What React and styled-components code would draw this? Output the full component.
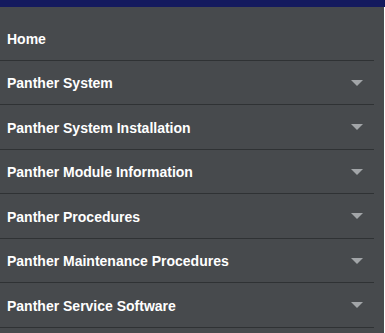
import React from "react";
import styled, { createGlobalStyle } from "styled-components";

const Global = createGlobalStyle`
  html, body { margin: 0; padding: 0; background: #ffffff; }
  body { font-family: "Liberation Sans", Arial, sans-serif; }
`;

const TopBar = styled.div`
  height: 7px;
  background: #141a5e;
`;

const Panel = styled.nav`
  width: 384px;
  height: 326px;
  box-sizing: border-box;
  background: #474a4d;
  padding: 9px 10px 0 0;
  overflow: hidden;
`;

const Row = styled.div`
  display: flex;
  align-items: center;
  justify-content: space-between;
  height: 44.5px;
  box-sizing: border-box;
  padding: 0 11px 0 7px;
  border-bottom: 1px solid #2f3234;
  color: #ffffff;
  font-size: 14px;
  font-weight: 700;
`;

const Label = styled.span`
  line-height: 16px;
  padding-top: 2px;
`;

const Caret = styled.span`
  width: 0;
  height: 0;
  border-left: 6px solid transparent;
  border-right: 6px solid transparent;
  border-top: 6px solid #a2a5a8;
  margin-top: 1px;
`;

const items = [
  { label: "Home", sub: false },
  { label: "Panther System", sub: true },
  { label: "Panther System Installation", sub: true },
  { label: "Panther Module Information", sub: true },
  { label: "Panther Procedures", sub: true },
  { label: "Panther Maintenance Procedures", sub: true },
  { label: "Panther Service Software", sub: true },
];

export default function App() {
  return (
    <>
      <Global />
      <TopBar />
      <Panel>
        {items.map((it) => (
          <Row key={it.label}>
            <Label>{it.label}</Label>
            {it.sub && <Caret />}
          </Row>
        ))}
      </Panel>
    </>
  );
}
